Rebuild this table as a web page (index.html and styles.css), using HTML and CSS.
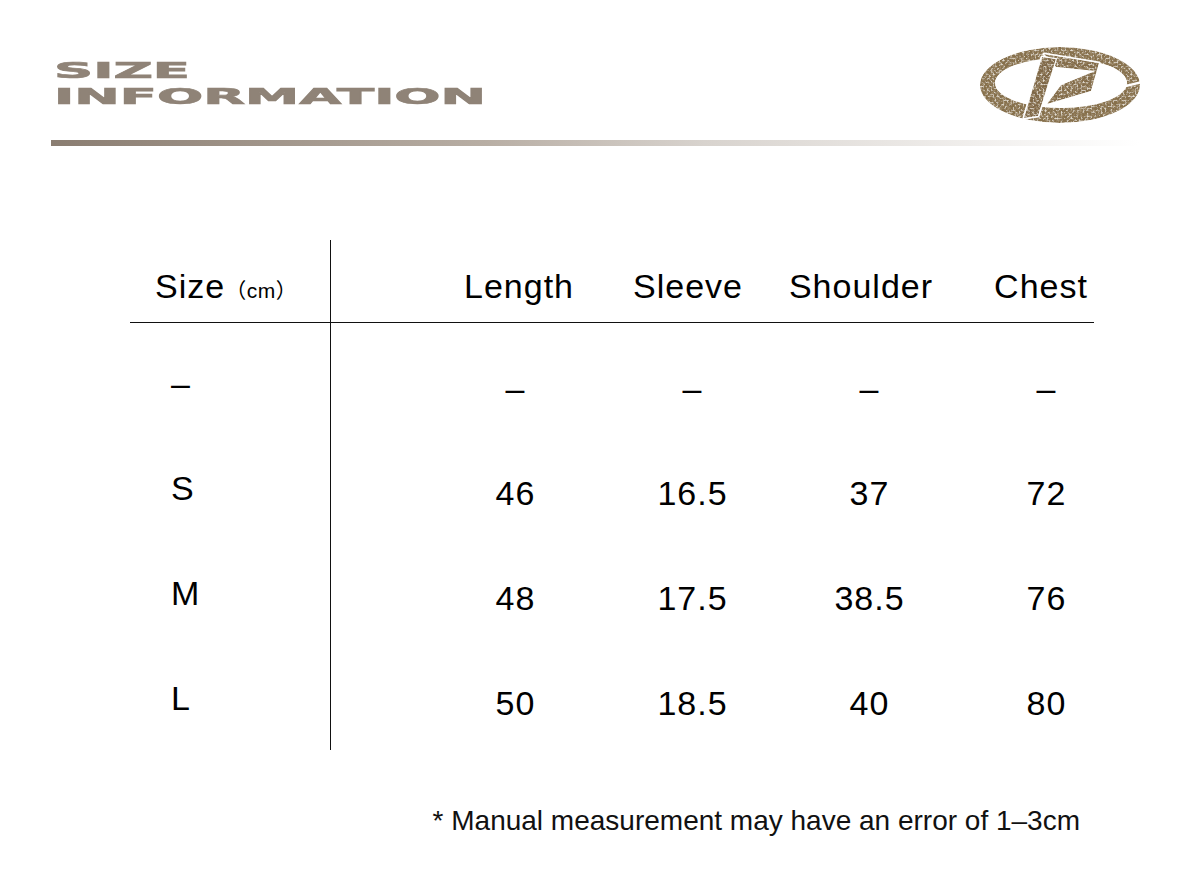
FILE: index.html
```html
<!DOCTYPE html>
<html lang="en">
<head>
<meta charset="utf-8">
<title>Size Information</title>
<link rel="stylesheet" href="styles.css">
</head>
<body>
<header class="header">
  <h1 class="title"><span class="title-line">SIZE</span><span class="title-line">INFORMATION</span></h1>
  <svg class="logo" width="170" height="90" viewBox="0 0 170 90" aria-label="logo">
    <defs>
      <filter id="grain" x="0" y="0" width="100%" height="100%">
        <feTurbulence type="fractalNoise" baseFrequency="0.5" numOctaves="3" seed="7" result="n1"/>
        <feColorMatrix in="n1" type="matrix" values="0 0 0 0 0.76  0 0 0 0 0.71  0 0 0 0 0.62  0 0 0 3.6 -1.8" result="light"/>
        <feTurbulence type="fractalNoise" baseFrequency="0.4" numOctaves="2" seed="21" result="n2"/>
        <feColorMatrix in="n2" type="matrix" values="0 0 0 0 0.38  0 0 0 0 0.29  0 0 0 0 0.17  0 0 0 3 -1.35" result="dark"/>
        <feMerge result="m"><feMergeNode in="SourceGraphic"/><feMergeNode in="dark"/><feMergeNode in="light"/></feMerge>
        <feComposite in="m" in2="SourceGraphic" operator="in"/>
      </filter>
    </defs>
    <g filter="url(#grain)">
      <path fill="#86704c" fill-rule="evenodd" d="M5,45 a80,38 0 1,0 160,0 a80,38 0 1,0 -160,0 Z M20,43 a66,25 0 1,0 132,0 a66,25 0 1,0 -132,0 Z"/>
    </g>
    <polygon fill="#fff" points="150,45 170,40 170,42.5 150,47.5"/>
    <g fill="#fff" stroke="#fff" stroke-width="3" stroke-linejoin="round">
      <polygon points="69,14 124,23 116,51 72,64 86,45 120,31 81,27"/>
      <polygon points="67,17 81,19 63,76 49,78"/>
    </g>
    <g filter="url(#grain)" fill="#836c49">
      <polygon points="69,14 124,23 116,51 72,64 86,45 120,31 81,27"/>
    </g>
    <polygon fill="#fff" stroke="#fff" stroke-width="2" stroke-linejoin="round" points="67,17 81,19 63,76 49,78"/>
    <g filter="url(#grain)" fill="#7f6846">
      <polygon points="67,17 81,19 63,76 49,78"/>
    </g>
  </svg>
</header>
<div class="rule"></div>

<section class="chart">
  <div class="row row-head">
    <div class="cell-size">Size<span class="unit">（cm）</span></div>
    <div class="cells cells-head">
      <span>Length</span><span>Sleeve</span><span>Shoulder</span><span>Chest</span>
    </div>
  </div>
  <div class="row">
    <div class="cell-size">–</div>
    <div class="cells"><span>–</span><span>–</span><span>–</span><span>–</span></div>
  </div>
  <div class="row">
    <div class="cell-size">S</div>
    <div class="cells"><span>46</span><span>16.5</span><span>37</span><span>72</span></div>
  </div>
  <div class="row">
    <div class="cell-size">M</div>
    <div class="cells"><span>48</span><span>17.5</span><span>38.5</span><span>76</span></div>
  </div>
  <div class="row row-last">
    <div class="cell-size">L</div>
    <div class="cells"><span>50</span><span>18.5</span><span>40</span><span>80</span></div>
  </div>
</section>

<p class="note">* Manual measurement may have an error of 1–3cm</p>
</body>
</html>
```

FILE: styles.css
```css
html, body {
  margin: 0;
  padding: 0;
}
body {
  width: 1200px;
  height: 880px;
  overflow: hidden;
  background: #fff;
  color: #000;
  font-family: "Liberation Sans", Arial, "Noto Sans CJK SC", sans-serif;
}

.header {
  display: flex;
  justify-content: space-between;
  align-items: flex-start;
  padding: 40px 55px 0 54px;
  height: 90px;
}
.title {
  margin: 0;
  padding-top: 18px;
  font-family: "DejaVu Sans", sans-serif;
  font-weight: bold;
  font-size: 21px;
  line-height: 26px;
  letter-spacing: 0;
  color: #8f8377;
  -webkit-text-stroke: 0.7px #8f8377;
}
.title-line {
  display: block;
  white-space: nowrap;
  transform: scaleX(2.59);
  transform-origin: left center;
}
.logo {
  display: block;
  flex: none;
}

.rule {
  margin: 10px 60px 0 51px;
  height: 6px;
  background: linear-gradient(90deg, #8a7d71 0%, #b8aea4 40%, #d8d3ce 60%, #f1efed 85%, #ffffff 100%);
}

.chart {
  margin: 94px 0 0 130px;
  width: 964px;
  font-size: 34px;
  line-height: 40px;
  letter-spacing: 1px;
}
.row {
  display: flex;
  height: 105px;
}
.row-head {
  height: 82px;
  border-bottom: 1px solid #111;
}
.row-last {
  height: 112px;
}
.cell-size {
  flex: none;
  box-sizing: border-box;
  width: 201px;
  border-right: 1px solid #111;
  padding: 40px 0 0 41px;
  white-space: nowrap;
}
.row-head .cell-size {
  padding: 26px 0 0 25px;
}
.unit {
  font-family: "Liberation Sans", "Noto Sans CJK SC", sans-serif;
  font-size: 21px;
  letter-spacing: 0.5px;
}
.cells {
  display: grid;
  grid-template-columns: repeat(4, 177px);
  padding: 45px 0 0 96px;
  text-align: center;
  white-space: nowrap;
}
.cells-head {
  grid-template-columns: 168px 170px 176px 184px;
  padding: 26px 0 0 104px;
}

.note {
  margin: 51px 0 0;
  padding-right: 120px;
  text-align: right;
  font-size: 28px;
  line-height: 40px;
  color: #111;
}
```
